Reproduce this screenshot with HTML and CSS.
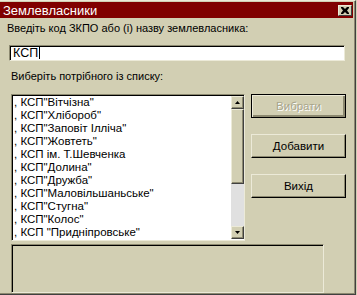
FILE: index.html
```html
<!DOCTYPE html>
<html lang="uk">
<head>
  <meta charset="UTF-8">
  <title>Землевласники</title>
  <link rel="stylesheet" href="styles.css">
</head>
<body>
<div class="window">
  <div class="titlebar">
    <span class="title">Землевласники</span>
    <span class="close">
      <svg width="8" height="7" viewBox="0 0 8 7"><path d="M0 0h2l2 2 2-2h2v1l-2 2.5 2 2.5v1h-2l-2-2-2 2h-2v-1l2-2.5-2-2.5z" fill="#000"/></svg>
    </span>
  </div>
  <div class="prompt">Введіть код ЗКПО або (і) назву землевласника:</div>
  <div class="input">КСП<span class="caret"></span></div>
  <div class="prompt pick">Виберіть потрібного із списку:</div>
  <div class="main">
    <div class="listbox">
      <ul class="items">
        <li>, КСП"Вітчізна"</li>
        <li>, КСП"Хлібороб"</li>
        <li>, КСП"Заповіт Ілліча"</li>
        <li>, КСП"Жовтеть"</li>
        <li>, КСП ім. Т.Шевченка</li>
        <li>, КСП"Долина"</li>
        <li>, КСП"Дружба"</li>
        <li>, КСП"Маловільшаньське"</li>
        <li>, КСП"Стугна"</li>
        <li>, КСП"Колос"</li>
        <li>, КСП "Придніпровське"</li>
      </ul>
      <div class="scrollbar">
        <div class="arrow up"><svg width="5" height="3" viewBox="0 0 5 3"><path d="M2.5 0L5 3H0z" fill="#000"/></svg></div>
        <div class="thumb"></div>
        <div class="track"></div>
        <div class="arrow down"><svg width="5" height="3" viewBox="0 0 5 3"><path d="M0 0h5L2.5 3z" fill="#000"/></svg></div>
      </div>
    </div>
    <div class="buttons">
      <button class="btn default" disabled>Вибрати</button>
      <button class="btn">Добавити</button>
      <button class="btn">Вихід</button>
    </div>
  </div>
  <div class="status"></div>
</div>
</body>
</html>
```

FILE: styles.css
```css
body {
  margin: 0;
  background: #d2cfb3;
  font-family: "Liberation Sans", Arial, sans-serif;
  font-size: 11px;
  color: #000;
}
.window {
  width: 355px;
  height: 293px;
  background: #d2cfb3;
  border-top: 1px solid #ecead8;
  border-right: 1px solid #404040;
  border-bottom: 1px solid #404040;
  box-shadow: inset -1px -1px 0 #8c8970;
  overflow: hidden;
}
.titlebar {
  margin: 1px 2px 0 0;
  height: 16px;
  background: #800000;
  color: #fff;
  display: flex;
  align-items: center;
  justify-content: space-between;
  padding: 0 1px 0 3px;
}
.title {
  font-size: 13px;
}
.close {
  width: 14px;
  height: 11px;
  box-sizing: border-box;
  background: #d2cfb3;
  border: 1px solid;
  border-color: #ecead8 #404040 #404040 #ecead8;
  display: flex;
  align-items: center;
  justify-content: center;
}
.prompt {
  margin: 4px 0 0 7px;
  height: 13px;
  line-height: 13px;
  white-space: nowrap;
}
.input {
  margin: 10px 0 0 9px;
  width: 336px;
  height: 16px;
  box-sizing: border-box;
  background: #fff;
  border: 1px solid;
  border-color: #8c8970 #ecead8 #ecead8 #8c8970;
  box-shadow: inset 1px 1px 0 #000;
  padding-left: 3px;
  font-size: 12.5px;
  line-height: 15px;
  display: flex;
  align-items: center;
}
.caret {
  width: 1px;
  height: 12px;
  background: #000;
  margin-left: 1px;
}
.prompt.pick {
  margin: 9px 0 0 11px;
}
.main {
  display: flex;
  margin: 11px 0 0 11px;
  gap: 6px;
}
.listbox {
  width: 234px;
  height: 147px;
  box-sizing: border-box;
  border: 1px solid;
  border-color: #8c8970 #ecead8 #ecead8 #8c8970;
  box-shadow: inset 1px 1px 0 #000;
  background: #fff;
  display: flex;
  padding: 1px 0 1px 1px;
}
.items {
  list-style: none;
  margin: 0;
  padding: 0 0 0 1px;
  flex: 1;
  font-size: 11.5px;
}
.items li {
  height: 13px;
  line-height: 13px;
  white-space: nowrap;
}
.scrollbar {
  width: 13px;
  display: flex;
  flex-direction: column;
  background: #e0e0e0;
}
.arrow, .thumb {
  box-sizing: border-box;
  background: #d2cfb3;
  border: 1px solid;
  border-color: #ecead8 #404040 #404040 #ecead8;
  box-shadow: inset -1px -1px 0 #8c8970;
}
.arrow {
  height: 13px;
  display: flex;
  align-items: center;
  justify-content: center;
}
.thumb {
  height: 75px;
}
.track {
  flex: 1;
}
.buttons {
  display: flex;
  flex-direction: column;
  gap: 16px;
}
.btn {
  width: 95px;
  height: 24px;
  margin: 0;
  padding: 0;
  box-sizing: border-box;
  background: #d2cfb3;
  font-family: inherit;
  font-size: 11.5px;
  color: #000;
  border: 1px solid;
  border-color: #ecead8 #000 #000 #ecead8;
  box-shadow: inset -1px -1px 0 #8c8970;
}
.btn.default {
  border-color: #000;
  box-shadow: inset 1px 1px 0 #ecead8, inset -2px -2px 0 #8c8970;
}
.btn:disabled {
  color: #a8a58c;
  text-shadow: 1px 1px 0 #fff;
}
.status {
  margin: 3px 0 0 11px;
  width: 313px;
  height: 49px;
  box-sizing: border-box;
  border: 1px solid;
  border-color: #8c8970 #ecead8 #ecead8 #8c8970;
  box-shadow: inset 1px 1px 0 #000;
}
```
